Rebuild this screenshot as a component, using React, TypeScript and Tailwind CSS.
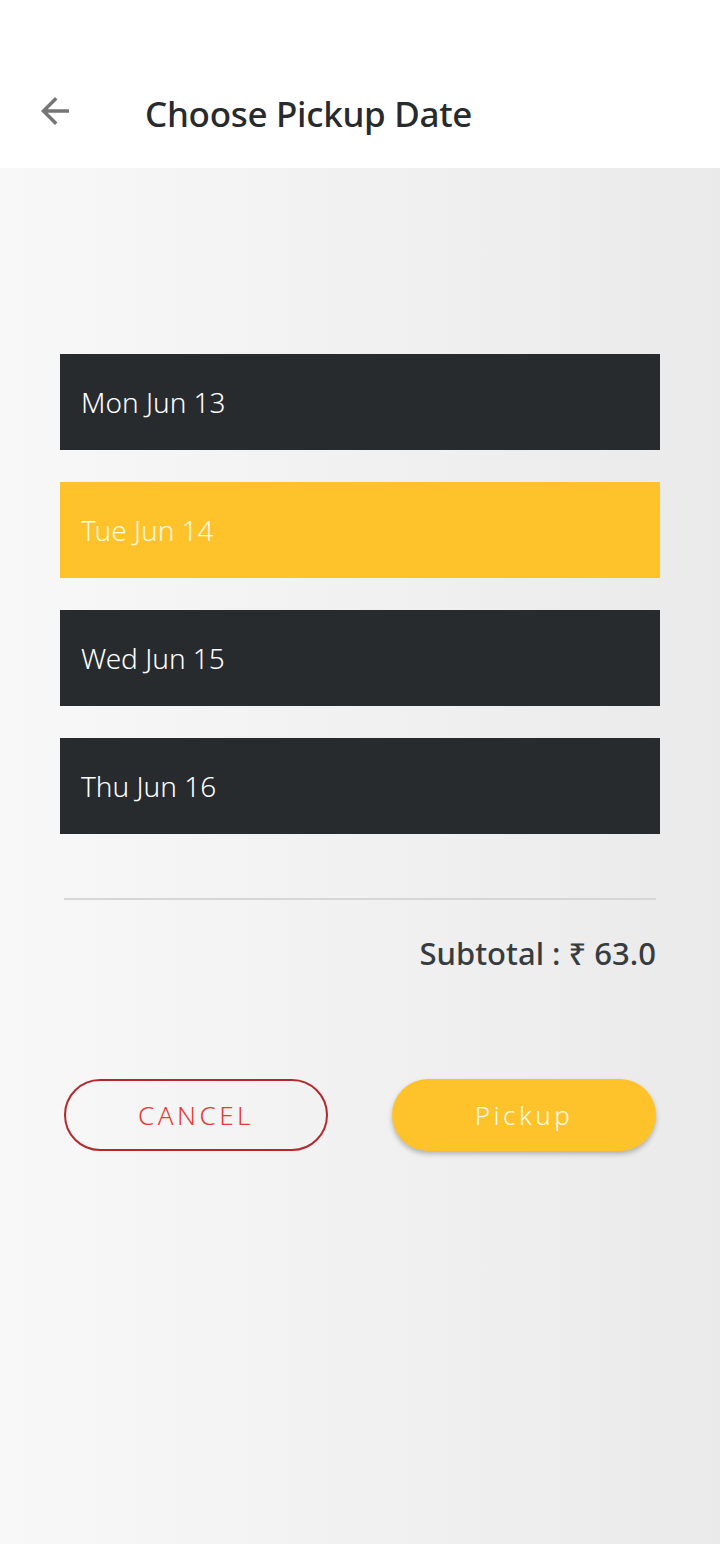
import React from "react";

const dates = [
  { label: "Mon Jun 13", selected: false },
  { label: "Tue Jun 14", selected: true },
  { label: "Wed Jun 15", selected: false },
  { label: "Thu Jun 16", selected: false },
];

export default function App() {
  return (
    <div
      className="w-[720px] h-[1544px] flex flex-col bg-gradient-to-r from-[#f8f8f8] to-[#eaeaea]"
      style={{ fontFamily: '"Noto Sans", "Open Sans", sans-serif' }}
    >
      <header className="h-[168px] bg-white flex items-end pb-[37px] shrink-0">
        <div className="w-[110px] flex justify-center">
          <svg width="42" height="42" viewBox="0 0 24 24" className="ml-[-1px] mb-[-1px]">
            <path d="M20 11H7.83l5.59-5.59L12 4l-8 8 8 8 1.41-1.41L7.83 13H20v-2z" fill="#757575" />
          </svg>
        </div>
        <h1 className="ml-[35px] text-[35px] font-medium text-[#272b2e] leading-none tracking-[-0.3px]">
          Choose Pickup Date
        </h1>
      </header>

      <main className="flex flex-col px-[60px] pt-[186px]">
        <div className="flex flex-col gap-[32px]">
          {dates.map((d) => (
            <div
              key={d.label}
              className={`h-[96px] flex items-center pl-[21px] text-[28px] font-light ${
                d.selected ? "bg-[#fec32b] text-[#fff8dc]" : "bg-[#272b2e] text-white"
              }`}
            >
              {d.label}
            </div>
          ))}
        </div>

        <div className="mx-[4px] mt-[64px] h-[2px] bg-[#d6d6d6]" />

        <div className="mx-[4px] mt-[38px] flex justify-end text-[31px] font-medium text-[#373c40] leading-none">
          Subtotal : ₹ 63.0
        </div>

        <div className="mx-[4px] mt-[110px] flex justify-between">
          <button className="w-[264px] h-[72px] rounded-full border-2 border-[#b3282d] text-[#e53935] text-[26px] font-light tracking-[3.5px] flex items-center justify-center">
            CANCEL
          </button>
          <button className="w-[264px] h-[72px] rounded-full bg-[#fec32b] text-[#fffbe8] text-[26px] font-light tracking-[3.5px] flex items-center justify-center shadow-[0_3px_5px_rgba(0,0,0,0.25)]">
            Pickup
          </button>
        </div>
      </main>
    </div>
  );
}
